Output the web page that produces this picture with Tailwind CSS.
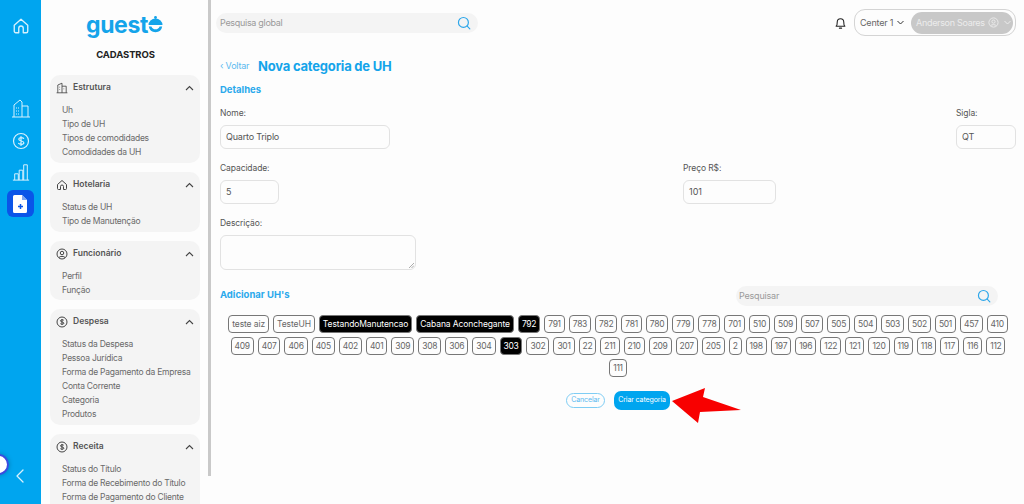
<!DOCTYPE html>
<html lang="en">
<head>
    <meta charset="UTF-8">
    <meta name="viewport" content="width=device-width, initial-scale=1.0">
    <title>Nova categoria de UH</title>
    <script src="https://cdn.jsdelivr.net/npm/@tailwindcss/browser@4"></script>
</head>
<body class="bg-[#fdfdfd] h-screen overflow-hidden font-['Inter',sans-serif] text-[#555]">
    <div class="flex h-[504px] relative overflow-hidden">
        <!-- Rail -->
        <nav class="w-[41px] shrink-0 bg-[#00a5ef] flex flex-col items-center text-[#d8f1fd] relative">
            <svg class="mt-[17px] w-[18px] h-[18px]" viewBox="0 0 24 24" fill="none" stroke="currentColor" stroke-width="1.8" stroke-linejoin="round" stroke-linecap="round"><path d="M3 11 12 3l9 8v8a2 2 0 0 1-2 2h-4v-6a3 3 0 0 0-6 0v6H5a2 2 0 0 1-2-2z"/></svg>
            <svg class="mt-[63px] w-[20px] h-[20px]" viewBox="0 0 20 20" fill="none" stroke="currentColor" stroke-width="1"><path d="M1 19h18M3 19V7l6-5 2 2v15M11 8h6v11M5 10h1M7 10h1M5 13h1M7 13h1M5 16h1M7 16h1"/></svg>
            <svg class="mt-[14px] w-[18px] h-[18px]" viewBox="0 0 24 24" fill="none" stroke="currentColor" stroke-width="1.6" stroke-linecap="round"><circle cx="12" cy="12" r="10"/><path d="M15.500 8.500c-1-1.200-6.500-1.800-6.500 1.300 0 3 6.800 1.500 6.800 4.500 0 3-5.800 2.400-7 1M12 6v12"/></svg>
            <svg class="mt-[13px] w-[18px] h-[18px]" viewBox="0 0 20 20" fill="none" stroke="currentColor" stroke-width="1.100"><path d="M1 19h18M3 19v-7h4v7M8 19V8h4v11M13 19V2h4v17"/></svg>
            <div class="mt-[9px] w-[27px] h-[27px] rounded-[6px] bg-[#0a55e8] flex items-center justify-center">
                <svg class="w-[15px] h-[18px]" viewBox="0 0 15 18"><path d="M1.500 0H9l5 5v11.500a1.500 1.500 0 0 1-1.500 1.500h-11A1.500 1.500 0 0 1 0 16.500v-15A1.500 1.500 0 0 1 1.500 0z" fill="#fff"/><path d="M9 0l5 5H9z" fill="#7fa8f4"/><path d="M7.500 9v5M5 11.500h5" stroke="#0a55e8" stroke-width="1.500"/></svg>
            </div>
            <svg class="absolute left-[16px] top-[469px] w-[8px] h-[14px]" viewBox="0 0 8 14" fill="none" stroke="currentColor" stroke-width="1.300" stroke-linecap="round" stroke-linejoin="round"><path d="M7 1 1 7l6 6"/></svg>
        </nav>
        <!-- Profile dot over the rail edge -->
        <div class="absolute left-[-12px] top-[454px] w-[21px] h-[21px] rounded-full bg-white border-[2px] border-[#3a4ce0] shadow-[0_0_5px_rgba(0,0,0,0.25)]"></div>

        <!-- Sidebar -->
        <aside class="w-[170px] shrink-0 flex flex-col overflow-hidden">
            <div class="shrink-0 mt-[13px] h-[36px] flex items-start justify-center pr-[3px] text-[#14a4ea]">
                <span class="text-[23px] font-bold tracking-[-0.4px] leading-[24px]">guest</span>
                <svg class="w-[15px] h-[18px] mt-[3px]" viewBox="0 0 15 18"><circle cx="7.500" cy="1.500" r="1.400" fill="#14a4ea"/><path d="M.5 9a7 6.500 0 0 1 14 0z" fill="#14a4ea"/><path d="M.8 10.500a6.800 6.800 0 0 0 13.400 0h-2.600a4.400 4.400 0 0 1-8.200 0z" fill="#14a4ea"/></svg>
            </div>
            <h1 class="shrink-0 text-[9.500px] font-bold text-[#222] leading-[12px] text-center pr-[1px] tracking-[-0.1px]">CADASTROS</h1>
            <div class="shrink-0 mt-[14px] w-[150px] flex flex-col gap-[9px] ml-[9px]">
                <section class="bg-[#f4f4f4] rounded-[10px] h-[88px] pt-[4px]">
                    <div class="flex items-center h-[17px] px-[6px] text-[8.500px] font-semibold">
                        <svg class="w-[12px] h-[12px] mr-[5px]" viewBox="0 0 20 20" fill="none" stroke="#444" stroke-width="1.400"><path d="M1 18h18M3 18V5l7-3v16M10 7h7v11M6 8v1M6 12v1M13 11v1"/></svg>
                        <span>Estrutura</span>
                        <svg class="ml-auto w-[9px] h-[6px]" viewBox="0 0 9 6" fill="none" stroke="#444" stroke-width="1.100"><path d="M1 5l3.500-3.500L8 5"/></svg>
                    </div>
                    <ul class="mt-[7px] pl-[12px] text-[8.500px] tracking-[-0.24px] leading-[14px] text-[#6a6a6a]">
                        <li>Uh</li><li>Tipo de UH</li><li>Tipos de comodidades</li><li>Comodidades da UH</li>
                    </ul>
                </section>
                <section class="bg-[#f4f4f4] rounded-[10px] h-[60px] pt-[4px]">
                    <div class="flex items-center h-[17px] px-[6px] text-[8.500px] font-semibold">
                        <svg class="w-[12px] h-[12px] mr-[5px]" viewBox="0 0 24 24" fill="none" stroke="#444" stroke-width="2"><path d="M3 11 12 3l9 8v8a2 2 0 0 1-2 2h-4v-6a3 3 0 0 0-6 0v6H5a2 2 0 0 1-2-2z"/></svg>
                        <span>Hotelaria</span>
                        <svg class="ml-auto w-[9px] h-[6px]" viewBox="0 0 9 6" fill="none" stroke="#444" stroke-width="1.100"><path d="M1 5l3.500-3.500L8 5"/></svg>
                    </div>
                    <ul class="mt-[7px] pl-[12px] text-[8.500px] tracking-[-0.24px] leading-[14px] text-[#6a6a6a]">
                        <li>Status de UH</li><li>Tipo de Manutenção</li>
                    </ul>
                </section>
                <section class="bg-[#f4f4f4] rounded-[10px] h-[59px] pt-[4px]">
                    <div class="flex items-center h-[17px] px-[6px] text-[8.500px] font-semibold">
                        <svg class="w-[12px] h-[12px] mr-[5px]" viewBox="0 0 24 24" fill="none" stroke="#444" stroke-width="2"><circle cx="12" cy="12" r="10"/><circle cx="12" cy="10" r="3.500"/><path d="M6 19c1.500-3 10.500-3 12 0"/></svg>
                        <span>Funcionário</span>
                        <svg class="ml-auto w-[9px] h-[6px]" viewBox="0 0 9 6" fill="none" stroke="#444" stroke-width="1.100"><path d="M1 5l3.500-3.500L8 5"/></svg>
                    </div>
                    <ul class="mt-[7px] pl-[12px] text-[8.500px] tracking-[-0.24px] leading-[14px] text-[#6a6a6a]">
                        <li>Perfil</li><li>Função</li>
                    </ul>
                </section>
                <section class="bg-[#f4f4f4] rounded-[10px] h-[116px] pt-[4px]">
                    <div class="flex items-center h-[17px] px-[6px] text-[8.500px] font-semibold">
                        <svg class="w-[12px] h-[12px] mr-[5px]" viewBox="0 0 24 24" fill="none" stroke="#444" stroke-width="2"><circle cx="12" cy="12" r="10"/><path d="M15.500 8.500c-1-1.200-6.500-1.800-6.500 1.300 0 3 6.800 1.500 6.800 4.500 0 3-5.800 2.400-7 1M12 6v12"/></svg>
                        <span>Despesa</span>
                        <svg class="ml-auto w-[9px] h-[6px]" viewBox="0 0 9 6" fill="none" stroke="#444" stroke-width="1.100"><path d="M1 5l3.500-3.500L8 5"/></svg>
                    </div>
                    <ul class="mt-[7px] pl-[12px] text-[8.500px] tracking-[-0.24px] leading-[14px] text-[#6a6a6a]">
                        <li>Status da Despesa</li><li>Pessoa Jurídica</li><li>Forma de Pagamento da Empresa</li><li>Conta Corrente</li><li>Categoria</li><li>Produtos</li>
                    </ul>
                </section>
                <section class="bg-[#f4f4f4] rounded-[10px] h-[88px] pt-[4px]">
                    <div class="flex items-center h-[17px] px-[6px] text-[8.500px] font-semibold">
                        <svg class="w-[12px] h-[12px] mr-[5px]" viewBox="0 0 24 24" fill="none" stroke="#444" stroke-width="2"><circle cx="12" cy="12" r="10"/><path d="M15.500 8.500c-1-1.200-6.500-1.800-6.500 1.300 0 3 6.800 1.500 6.800 4.500 0 3-5.800 2.400-7 1M12 6v12"/></svg>
                        <span>Receita</span>
                        <svg class="ml-auto w-[9px] h-[6px]" viewBox="0 0 9 6" fill="none" stroke="#444" stroke-width="1.100"><path d="M1 5l3.500-3.500L8 5"/></svg>
                    </div>
                    <ul class="mt-[7px] pl-[12px] text-[8.500px] tracking-[-0.24px] leading-[14px] text-[#6a6a6a]">
                        <li>Status do Título</li><li>Forma de Recebimento do Título</li><li>Forma de Pagamento do Cliente</li>
                    </ul>
                </section>
            </div>
        </aside>
        <!-- Sidebar scrollbar -->
        <div class="w-[3px] h-[476px] bg-[#c9c9c9] shrink-0 ml-[-3px]"></div>

        <!-- Main -->
        <main class="flex-1 min-w-0 relative">
            <header class="flex items-start h-[50px] pt-[9px] pr-[8px]">
                <div class="ml-[5px] mt-[4px] w-[262px] h-[20px] rounded-[10px] bg-[#f4f4f4] flex items-center pl-[4px] pr-[7px] text-[9px] tracking-[-0.3px] text-[#9a9a9a]">
                    <span>Pesquisa global</span>
                    <svg class="ml-auto w-[14px] h-[14px]" viewBox="0 0 24 24" fill="none" stroke="#2ba6ea" stroke-width="2" stroke-linecap="round"><circle cx="11" cy="11" r="8.500"/><path d="M17.500 17.500 22 22"/></svg>
                </div>
                <svg class="ml-auto mt-[7px] w-[13px] h-[14px]" viewBox="0 0 24 24" fill="none" stroke="#222" stroke-width="2" stroke-linecap="round" stroke-linejoin="round"><path d="M4 18c2-2 2-4 2-8a6 6 0 0 1 12 0c0 4 0 6 2 8z"/><path d="M10 21.500h4"/></svg>
                <div class="ml-[7px] w-[162px] h-[27px] rounded-[11px] border border-[#d4d4d4] flex items-center pl-[5px] pr-[2px] text-[9px] tracking-[-0.2px]">
                    <span class="text-[#666]">Center 1</span>
                    <svg class="ml-[4px] w-[7px] h-[5px]" viewBox="0 0 7 5" fill="none" stroke="#333" stroke-width="1"><path d="M.5 1 3.500 4l3-3"/></svg>
                    <div class="ml-auto w-[102px] h-[22px] rounded-[11px] bg-[#c8c8c8] flex items-center pl-[5px] text-[9px] tracking-[-0.3px] text-[#ececec]">
                        <span class="whitespace-nowrap">Anderson Soares</span>
                        <svg class="ml-[3px] w-[11px] h-[11px]" viewBox="0 0 24 24" fill="none" stroke="#ececec" stroke-width="2"><circle cx="12" cy="12" r="10"/><circle cx="12" cy="10" r="3.500"/><path d="M6 19c1.500-3 10.500-3 12 0"/></svg>
                        <svg class="ml-[5px] w-[7px] h-[5px]" viewBox="0 0 7 5" fill="none" stroke="#ececec" stroke-width="1"><path d="M.5 1 3.500 4l3-3"/></svg>
                    </div>
                </div>
            </header>

            <div class="pl-[9px] pr-[8px]">
                <div class="flex items-center h-[16px] mt-[8px]">
                    <span class="text-[9px] tracking-[-0.2px] text-[#5bb9ef] w-[38px]">‹ Voltar</span>
                    <h2 class="text-[13px] tracking-[-0.2px] font-bold text-[#14a4ea] leading-none">Nova categoria de UH</h2>
                </div>
                <h3 class="mt-[9px] text-[9.500px] font-bold text-[#2ba9ec] leading-[14px]">Detalhes</h3>

                <div class="mt-[10px] flex justify-between">
                    <label class="block">
                        <span class="block text-[8.500px] tracking-[-0.1px] leading-[12px]">Nome:</span>
                        <span class="mt-[6px] flex items-center w-[170px] h-[24px] rounded-[6px] border border-[#e2e2e2] px-[5px] text-[9px] tracking-[-0.2px]">Quarto Triplo</span>
                    </label>
                    <label class="block">
                        <span class="block text-[8.500px] tracking-[-0.1px] leading-[12px]">Sigla:</span>
                        <span class="mt-[6px] flex items-center w-[60px] h-[24px] rounded-[6px] border border-[#e2e2e2] px-[5px] text-[9px]">QT</span>
                    </label>
                </div>
                <div class="mt-[13px] flex">
                    <label class="block w-[463px]">
                        <span class="block text-[8.500px] tracking-[-0.1px] leading-[12px]">Capacidade:</span>
                        <span class="mt-[6px] flex items-center w-[59px] h-[24px] rounded-[6px] border border-[#e2e2e2] px-[5px] text-[9px]">5</span>
                    </label>
                    <label class="block">
                        <span class="block text-[8.500px] tracking-[-0.1px] leading-[12px]">Preço R$:</span>
                        <span class="mt-[6px] flex items-center w-[93px] h-[24px] rounded-[6px] border border-[#e2e2e2] px-[5px] text-[9px]">101</span>
                    </label>
                </div>
                <label class="block mt-[13px]">
                    <span class="block text-[8.500px] tracking-[-0.1px] leading-[12px]">Descrição:</span>
                    <span class="mt-[6px] relative block w-[196px] h-[35px] rounded-[6px] border border-[#e2e2e2]">
                        <svg class="absolute right-[1px] bottom-[1px] w-[5px] h-[5px]" viewBox="0 0 5 5" stroke="#888" stroke-width=".7"><path d="M0 5 5 0M2.500 5 5 2.500"/></svg>
                    </span>
                </label>

                <div class="mt-[15px] flex items-center h-[21px]">
                    <h3 class="flex-1 text-[9.500px] font-bold text-[#2ba9ec]">Adicionar UH's</h3>
                    <div class="mr-[18px] w-[262px] h-[20px] rounded-[10px] bg-[#f4f4f4] flex items-center pl-[3px] pr-[7px] text-[9px] tracking-[-0.2px] text-[#9a9a9a]">
                        <span>Pesquisar</span>
                        <svg class="ml-auto w-[14px] h-[14px]" viewBox="0 0 24 24" fill="none" stroke="#2ba6ea" stroke-width="2" stroke-linecap="round"><circle cx="11" cy="11" r="8.500"/><path d="M17.500 17.500 22 22"/></svg>
                    </div>
                </div>

                <div class="mt-[9px] flex flex-wrap justify-center gap-x-[4px] gap-y-[4px] text-[8.500px] tracking-[-0.3px] leading-[16px] text-[#666] [&>span]:h-[18px] [&>span]:px-[3px] [&>span]:rounded-[4px] [&>span]:border [&>span]:border-[#777] [&>span]:whitespace-nowrap">
                    <span class="tracking-[-0.1px]">teste aiz</span><span class="tracking-[-0.1px]">TesteUH</span>
                    <span class="bg-black text-white tracking-[-0.1px]">TestandoManutencao</span>
                    <span class="bg-black text-white tracking-[-0.1px]">Cabana Aconchegante</span>
                    <span class="bg-black text-white">792</span>
                    <span>791</span><span>783</span><span>782</span><span>781</span><span>780</span><span>779</span><span>778</span><span>701</span><span>510</span><span>509</span><span>507</span><span>505</span><span>504</span><span>503</span><span>502</span><span>501</span><span>457</span><span>410</span>
                    <span>409</span><span>407</span><span>406</span><span>405</span><span>402</span><span>401</span><span>309</span><span>308</span><span>306</span><span>304</span>
                    <span class="bg-black text-white">303</span>
                    <span>302</span><span>301</span><span>22</span><span>211</span><span>210</span><span>209</span><span>207</span><span>205</span><span>2</span><span>198</span><span>197</span><span>196</span><span>122</span><span>121</span><span>120</span><span>119</span><span>118</span><span>117</span><span>116</span><span>112</span><span>111</span>
                </div>

                <div class="mt-[14px] flex items-center justify-center gap-[9px]">
                    <button class="w-[39px] h-[15px] rounded-[8px] border border-[#7fcdf4] text-[7px] tracking-[-0.1px] text-[#5bb9ef]">Cancelar</button>
                    <button class="w-[56px] h-[19px] rounded-[7px] bg-[#00a5ef] text-[7px] tracking-[-0.1px] text-white">Criar categoria</button>
                </div>
            </div>
            <!-- Annotation arrow over the page -->
            <svg class="absolute left-[461px] top-[386px] w-[72px] h-[38px]" viewBox="0 0 72 38"><path d="M0 15 33 2 31 11 69 24 28 26 26 37z" fill="#f80000"/></svg>
        </main>
    </div>
</body>
</html>
